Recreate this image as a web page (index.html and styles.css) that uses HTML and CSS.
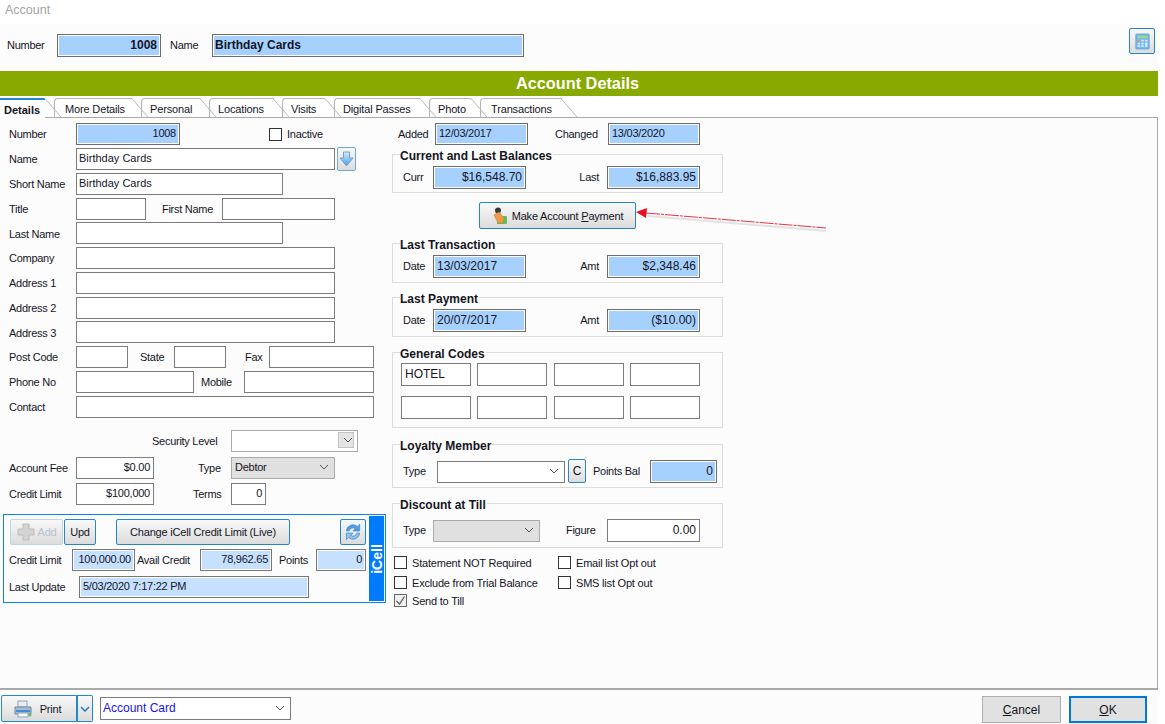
FILE: index.html
```html
<!DOCTYPE html>
<html lang="en">
<head>
<meta charset="utf-8">
<title>Account</title>
<link rel="stylesheet" href="styles.css">
</head>
<body>
<div class="app">
  <div class="titlebar">Account</div>
  <div class="header">
    <span class="lbl w50">Number</span>
    <span class="f ro strong right w104">1008</span>
    <span class="lbl ml9 w42">Name</span>
    <span class="f ro strong w312">Birthday Cards</span>
    <button class="btn calc" aria-label="Calculator">
      <svg width="15" height="17" viewBox="0 0 18 20"><rect x="1" y="1" width="16" height="18" rx="1" fill="#7ab8ec" stroke="#5aa2dc"/><rect x="3" y="3" width="12" height="3" fill="#8fdc8f"/><rect x="3" y="8" width="3" height="2" fill="#e88"/><rect x="7.500" y="8" width="3" height="2" fill="#d5e9fa"/><rect x="12" y="8" width="3" height="2" fill="#d5e9fa"/><rect x="3" y="11.500" width="3" height="2" fill="#d5e9fa"/><rect x="7.500" y="11.500" width="3" height="2" fill="#d5e9fa"/><rect x="12" y="11.500" width="3" height="5" fill="#d5e9fa"/><rect x="3" y="14.500" width="3" height="2" fill="#d5e9fa"/><rect x="7.500" y="14.500" width="3" height="2" fill="#d5e9fa"/></svg>
    </button>
  </div>
  <div class="banner">Account Details</div>
  <div class="tabs">
    <div class="tab active t-details">Details</div>
    <div class="tab t-more">More Details</div>
    <div class="tab t-personal">Personal</div>
    <div class="tab t-locations">Locations</div>
    <div class="tab t-visits">Visits</div>
    <div class="tab t-digital">Digital Passes</div>
    <div class="tab t-photo">Photo</div>
    <div class="tab t-trans">Transactions</div>
  </div>

  <div class="panel">
    <div class="col-left">
      <div class="row">
        <span class="lbl w67">Number</span>
        <span class="f ro right w104">1008</span>
        <span class="check ml89"></span><span class="lbl ml5">Inactive</span>
      </div>
      <div class="row gap3">
        <span class="lbl w67">Name</span>
        <span class="f txt w259">Birthday Cards</span>
        <button class="btn arrowbtn" aria-label="Move down">
          <svg width="15" height="16" viewBox="0 0 15 16"><defs><linearGradient id="dn" x1="0" y1="0" x2="0" y2="1"><stop offset="0" stop-color="#d8e9f7"/><stop offset="1" stop-color="#4c9ee0"/></linearGradient></defs><path d="M4.500 1h6v6h3.500l-6.500 8-6.500-8h3.500z" fill="url(#dn)" stroke="#6ca3cf"/></svg>
        </button>
      </div>
      <div class="row gap3"><span class="lbl w67">Short Name</span><span class="f txt w207">Birthday Cards</span></div>
      <div class="row gap3">
        <span class="lbl w67">Title</span><span class="f w70"></span>
        <span class="lbl ml16 w60">First Name</span><span class="f w113"></span>
      </div>
      <div class="row gap2"><span class="lbl w67">Last Name</span><span class="f w207"></span></div>
      <div class="row gap3"><span class="lbl w67">Company</span><span class="f w259"></span></div>
      <div class="row gap3"><span class="lbl w67">Address 1</span><span class="f w259"></span></div>
      <div class="row gap3"><span class="lbl w67">Address 2</span><span class="f w259"></span></div>
      <div class="row gap2"><span class="lbl w67">Address 3</span><span class="f w259"></span></div>
      <div class="row gap3">
        <span class="lbl w67">Post Code</span><span class="f w52"></span>
        <span class="lbl ml12 w34">State</span><span class="f w52"></span>
        <span class="lbl ml19 w24">Fax</span><span class="f w105"></span>
      </div>
      <div class="row gap3">
        <span class="lbl w67">Phone No</span><span class="f w118"></span>
        <span class="lbl ml7 w43">Mobile</span><span class="f w130"></span>
      </div>
      <div class="row gap3"><span class="lbl w67">Contact</span><span class="f w298"></span></div>

      <div class="row gap12">
        <span class="lbl ml143 w79">Security Level</span>
        <span class="f sel soft w127"><span class="chevbox"><svg class="chev" viewBox="0 0 10 6"><path d="M1 1l4 4 4-4"/></svg></span></span>
      </div>
      <div class="row gap5">
        <span class="lbl w67">Account Fee</span><span class="f right w78">$0.00</span>
        <span class="lbl ml44 w33">Type</span>
        <span class="f sel soft grey w104">Debtor<svg class="chev" viewBox="0 0 10 6"><path d="M1 1l4 4 4-4"/></svg></span>
      </div>
      <div class="row gap4">
        <span class="lbl w67">Credit Limit</span><span class="f right w78">$100,000</span>
        <span class="lbl ml39 w38">Terms</span><span class="f right w35">0</span>
      </div>

      <section class="icell">
        <div class="icell-main">
          <div class="btnrow">
            <button class="btn disabled w53">
              <svg width="18" height="18" viewBox="0 0 18 18"><path d="M6 1h6v5h5v6h-5v5H6v-5H1V6h5z" fill="#d4d4d4" stroke="#bcbcbc"/></svg>Add
            </button>
            <button class="btn ml1 w32">Upd</button>
            <button class="btn ml20 w174">Change iCell Credit Limit (Live)</button>
            <button class="btn ml50 w26" aria-label="Refresh">
              <svg width="20" height="20" viewBox="0 0 18 18"><path d="M3 8a6 6 0 0 1 10-4l2-2v6h-6l2-2a3.500 3.500 0 0 0-5.500 2z" fill="#4f9fe2" stroke="#3b86c8" stroke-width=".6"/><path d="M15 10a6 6 0 0 1-10 4l-2 2v-6h6l-2 2a3.500 3.500 0 0 0 5.500-2z" fill="#8cc3ef" stroke="#3b86c8" stroke-width=".6"/></svg>
            </button>
          </div>
          <div class="row gap4">
            <span class="lbl w63">Credit Limit</span><span class="f pale right w63">100,000.00</span>
            <span class="lbl ml2 w63">Avail Credit</span><span class="f pale right w72">78,962.65</span>
            <span class="lbl ml7 w37">Points</span><span class="f pale right w50">0</span>
          </div>
          <div class="row gap5">
            <span class="lbl w70">Last Update</span><span class="f pale w230">5/03/2020 7:17:22 PM</span>
          </div>
        </div>
        <div class="icell-bar"><span>iCell</span></div>
      </section>
    </div>

    <div class="col-right">
      <div class="row indent6">
        <span class="lbl w37">Added</span><span class="f ro w93">12/03/2017</span>
        <span class="lbl ml27 w53">Changed</span><span class="f ro w92">13/03/2020</span>
      </div>

      <div class="group g-bal">
        <div class="legend">Current and Last Balances</div>
        <div class="grow r3">
          <span class="lbl w30">Curr</span><span class="f ro big right w93">$16,548.70</span>
          <span class="lbl end w81">Last</span><span class="f ro big right w93">$16,883.95</span>
        </div>
      </div>

      <button class="btn pay">
        <svg width="16" height="18" viewBox="0 0 16 18"><rect x="5" y="9" width="10" height="8" rx="1" fill="#58c25c"/><circle cx="6" cy="3.500" r="3" fill="#3c3c3c"/><path d="M2 8l5-3 5 6-1 5H6z" fill="#ef9a45" stroke="#c9742a" stroke-width=".5"/></svg>
        <span>Make Account <u>P</u>ayment</span>
      </button>

      <div class="group g-trans">
        <div class="legend">Last Transaction</div>
        <div class="grow r3">
          <span class="lbl w30">Date</span><span class="f ro big w93">13/03/2017</span>
          <span class="lbl end w81">Amt</span><span class="f ro big right w93">$2,348.46</span>
        </div>
      </div>

      <div class="group g-trans">
        <div class="legend">Last Payment</div>
        <div class="grow r3">
          <span class="lbl w30">Date</span><span class="f ro big w93">20/07/2017</span>
          <span class="lbl end w81">Amt</span><span class="f ro big right w93">($10.00)</span>
        </div>
      </div>

      <div class="group g-codes">
        <div class="legend">General Codes</div>
        <div class="codes">
          <span class="f big">HOTEL</span><span class="f"></span><span class="f"></span><span class="f"></span>
          <span class="f"></span><span class="f"></span><span class="f"></span><span class="f"></span>
        </div>
      </div>

      <div class="group g-loyal">
        <div class="legend">Loyalty Member</div>
        <div class="grow r7">
          <span class="lbl w34">Type</span>
          <span class="f sel w128"><svg class="chev" viewBox="0 0 10 6"><path d="M1 1l4 4 4-4"/></svg></span>
          <button class="btn cbtn">C</button>
          <span class="lbl ml7 w57">Points Bal</span>
          <span class="f ro big right w67">0</span>
        </div>
      </div>

      <div class="group g-disc">
        <div class="legend">Discount at Till</div>
        <div class="grow r7">
          <span class="lbl w30">Type</span>
          <span class="f sel soft grey w107"><svg class="chev" viewBox="0 0 10 6"><path d="M1 1l4 4 4-4"/></svg></span>
          <span class="lbl ml26 w41">Figure</span>
          <span class="f big right w93">0.00</span>
        </div>
      </div>

      <div class="checks">
        <label class="cb"><span class="check"></span>Statement NOT Required</label>
        <label class="cb"><span class="check"></span>Email list Opt out</label>
        <label class="cb"><span class="check"></span>Exclude from Trial Balance</label>
        <label class="cb"><span class="check"></span>SMS list Opt out</label>
        <label class="cb"><span class="check on"><svg width="11" height="11" viewBox="0 0 11 11"><path d="M1.500 6l3 3 5-7.500" fill="none" stroke="#555" stroke-width="1.200"/></svg></span>Send to Till</label>
      </div>
    </div>

    <svg class="pointer" width="200" height="34" viewBox="0 0 200 34">
      <path d="M12 6L190 21" stroke="#000" stroke-opacity=".1" stroke-width="2" transform="translate(0 2)"/>
      <path d="M10 5L190 20" stroke="#ee3040" stroke-width="1" stroke-dasharray="14 1 3 1"/>
      <path d="M0 4l11-4-1 10z" fill="#e8101e"/>
    </svg>
  </div>

  <div class="footer">
    <div class="split">
      <button class="btn printbtn">
        <svg width="20" height="18" viewBox="0 0 20 18"><rect x="5" y="1" width="9" height="6" fill="#e8eef4" stroke="#8fa3b5"/><path d="M2 7h16v7H2z" fill="#a9bccd" stroke="#6f8aa3"/><rect x="3" y="10" width="14" height="2" fill="#3f8fd8"/><rect x="5" y="13" width="10" height="4" fill="#f3f6f9" stroke="#8fa3b5"/><circle cx="17" cy="15" r="1.500" fill="#5cc24f"/></svg>
        <span>Print</span>
      </button>
      <button class="btn printdrop" aria-label="Print options"><svg class="chev blue" viewBox="0 0 10 6"><path d="M1 1l4 4 4-4"/></svg></button>
    </div>
    <span class="f sel big link w191">Account Card<svg class="chev" viewBox="0 0 10 6"><path d="M1 1l4 4 4-4"/></svg></span>
    <button class="cmd cancel"><u>C</u>ancel</button>
    <button class="cmd ok"><u>O</u>K</button>
  </div>
</div>
</body>
</html>
```
FILE: styles.css
```css
* { box-sizing: border-box; }
html, body { margin: 0; padding: 0; height: 100%; overflow: hidden; background: #fff; }
body { font: 11px/14px "Liberation Sans", Arial, sans-serif; color: #15151f; }
button { font: inherit; color: inherit; margin: 0; padding: 0; }

.app { width: 1158px; height: 724px; display: flex; flex-direction: column; background: #fcfcfc; }

.titlebar { height: 24px; padding: 3px 5px 0; color: #a3a3a3; background: #fff; font-size: 12.500px; }
.header { height: 47px; display: flex; align-items: flex-start; padding: 10px 3px 0 7px; }
.header .f { height: 23px; }
.header .lbl { line-height: 23px; }
.calc { margin: -6px 0 0 auto; width: 26px; height: 26px; }

.banner { height: 25px; padding-right: 3px; background: #87a900; color: #fff; font-size: 16.300px; font-weight: 700; line-height: 25px; text-align: center; }

.tabs { height: 22px; display: flex; padding-top: 2px; background: #fff; border-bottom: 1px solid #a9a9a9; }
.tab { position: relative; height: 20px; margin-right: 9px; padding: 3px 0 0 8px; border: 1px solid #b5b5b5; border-bottom: 0; border-right: 0; border-radius: 4px 0 0 0; letter-spacing: -.15px; }
.tab::after { content: ""; position: absolute; top: -1px; right: 0; width: 1px; height: 20px; border-right: 1px solid #b5b5b5; transform: skewX(41deg); transform-origin: top left; }
.tab.active { height: 21px; padding-left: 4px; border: 0; border-top: 2px solid #1f86d8; border-radius: 0; font-weight: 700; letter-spacing: 0; background: #fcfcfc; }
.tab.active::after { top: -2px; height: 20px; }
.t-details { width: 45px; }
.t-more { width: 78px; padding-left: 10px; }
.t-personal { width: 59px; }
.t-locations { width: 64px; }
.t-visits { width: 43px; }
.t-digital { width: 86px; padding-left: 8px; }
.t-photo { width: 42px; }
.t-trans { width: 81px; padding-left: 10px; }

.panel { position: relative; height: 572px; display: flex; padding: 5px 0 0 9px; border-right: 1px solid #a9a9a9; border-bottom: 2px solid #a9a9a9; }
.col-left { width: 383px; }
.col-right { width: 331px; }

.row { display: flex; align-items: center; height: 22px; }
.gap2 { margin-top: 2px; }
.gap2 .lbl { padding-top: 2px; }
.gap3 { margin-top: 3px; }
.gap4 { margin-top: 4px; }
.gap5 { margin-top: 5px; }
.gap12 { margin-top: 12px; }
.indent6 { padding-left: 6px; }

.lbl { flex: none; white-space: nowrap; letter-spacing: -.27px; }
.lbl.end { text-align: right; padding-right: 8px; }

.f { flex: none; display: flex; align-items: center; height: 22px; padding: 0 3px 2px; background: #fff; border: 1px solid #7c7c7c; white-space: nowrap; letter-spacing: -.25px; }
.txt { padding-left: 2px; letter-spacing: 0; }
.right { justify-content: flex-end; }
.ro { background: #a6d1ff; border-color: #6c6c6c; box-shadow: inset 0 0 0 1px #fff; }
.pale { background: #c6e1ff; border-color: #777; box-shadow: inset 0 0 0 1px #fff; }
.strong { font-size: 12px; font-weight: 700; letter-spacing: 0; padding-left: 2px; }
.big { font-size: 12px; height: 23px; letter-spacing: 0; }
.sel { justify-content: space-between; padding-right: 5px; }
.sel .chev:only-child { margin-left: auto; }
.soft { border-color: #ababab; }
.grey { background: #e0e0e0; }
.link { color: #1414f0; padding-left: 2px; }

.chev { width: 10px; height: 6px; fill: none; stroke: #555; stroke-width: 1; }
.chev.blue { stroke: #1f7cc4; stroke-width: 1.500; }
.chevbox { display: flex; align-items: center; justify-content: center; width: 16px; height: 16px; margin: 0 -2px 0 auto; background: #e3e3e3; border: 1px solid #c4c4c4; }

.check { flex: none; display: block; width: 13px; height: 13px; background: #fff; border: 1px solid #333; }
.check.on { display: flex; align-items: center; justify-content: center; background: #f1f1f1; border-color: #666; }

.btn { flex: none; display: flex; align-items: center; justify-content: center; gap: 4px; height: 26px; background: linear-gradient(#f8f8f8, #dcdcdc); border: 1px solid #2787c4; border-radius: 2px; letter-spacing: -.2px; }
.btn.disabled { color: #b4c4d0; border-color: #bdd6e6; gap: 3px; }
.arrowbtn { width: 19px; height: 24px; margin: -1px 0 0 2px; border-color: #67abd6; }

.w24 { width: 24px; } .w26 { width: 26px; } .w30 { width: 30px; } .w32 { width: 32px; } .w33 { width: 33px; }
.w34 { width: 34px; } .w35 { width: 35px; } .w37 { width: 37px; } .w38 { width: 38px; }
.w41 { width: 41px; } .w42 { width: 42px; } .w43 { width: 43px; } .w50 { width: 50px; }
.w52 { width: 52px; } .w53 { width: 53px; } .w57 { width: 57px; } .w60 { width: 60px; }
.w63 { width: 63px; } .w67 { width: 67px; } .w70 { width: 70px; }
.w72 { width: 72px; } .w78 { width: 78px; } .w79 { width: 79px; } .w81 { width: 81px; }
.w92 { width: 92px; } .w93 { width: 93px; } .w104 { width: 104px; } .w105 { width: 105px; }
.w107 { width: 107px; } .w113 { width: 113px; } .w118 { width: 118px; } .w127 { width: 127px; }
.w128 { width: 128px; } .w130 { width: 130px; } .w174 { width: 174px; } .w191 { width: 191px; }
.w207 { width: 207px; } .w230 { width: 230px; } .w259 { width: 259px; } .w298 { width: 298px; }
.w312 { width: 312px; }
.ml1 { margin-left: 1px; } .ml2 { margin-left: 2px; } .ml5 { margin-left: 5px; } .ml7 { margin-left: 7px; }
.ml9 { margin-left: 9px; } .ml12 { margin-left: 12px; } .ml16 { margin-left: 16px; } .ml19 { margin-left: 19px; }
.ml20 { margin-left: 20px; } .ml26 { margin-left: 26px; } .ml27 { margin-left: 27px; } .ml39 { margin-left: 39px; }
.ml44 { margin-left: 44px; } .ml50 { margin-left: 50px; } .ml89 { margin-left: 89px; } .ml143 { margin-left: 143px; }

.icell { display: flex; width: 383px; height: 89px; margin: 9px 0 0 -6px; padding: 1px; border: 1px solid #0a84f0; background: #fcfcfc; }
.icell-main { width: 365px; padding: 3px 0 0 4px; }
.btnrow { display: flex; padding-left: 1px; }
.icell-bar { display: flex; align-items: center; justify-content: center; width: 15px; background: #007bff; color: #fff; font-size: 14px; font-weight: 700; }
.icell-bar span { transform: rotate(-90deg); }

.group { width: 331px; border: 1px solid #dcdcdc; }
.legend { width: max-content; margin: -6px 0 0 7px; font-size: 12px; font-weight: 700; line-height: 14px; background: #fcfcfc; padding-right: 1px; }
.g-bal { height: 39px; margin-top: 9px; }
.g-trans { height: 40px; margin-top: 14px; }
.g-codes { height: 76px; margin-top: 15px; }
.g-loyal { height: 44px; margin-top: 16px; }
.g-disc { height: 45px; margin-top: 15px; }
.grow { display: flex; align-items: center; height: 23px; padding-left: 10px; }
.grow .lbl { padding-bottom: 2px; }
.r3 { margin-top: 3px; }
.r7 { margin-top: 7px; }
.cbtn { width: 18px; height: 24px; margin: -1px 0 0 3px; font-size: 12px; }

.codes { display: grid; grid-template-columns: 76px 77px 76px 70px; grid-auto-rows: 23px; row-gap: 10px; margin-top: 2px; padding-left: 8px; }
.codes .f { width: 70px; height: 23px; }

.pay { width: 157px; height: 27px; margin: 9px 0 0 87px; gap: 4px; }

.checks { display: grid; grid-template-columns: 164px 1fr; grid-template-rows: 20px 18px 14px; margin-top: 8px; padding-left: 2px; }
.cb { display: flex; align-items: flex-start; height: 14px; gap: 5px; white-space: nowrap; letter-spacing: -.2px; }

.pointer { position: absolute; left: 636px; top: 90px; }

.footer { flex: 1; display: flex; align-items: flex-start; padding: 5px 11px 0 1px; }
.split { display: flex; }
.printbtn { width: 76px; height: 27px; gap: 7px; border-radius: 2px 0 0 2px; padding-right: 4px; }
.printdrop { width: 16px; height: 27px; border-left: 0; border-radius: 0 2px 2px 0; box-shadow: inset 1px 0 0 #2787c4; }
.footer > .f { margin: 2px 0 0 7px; }
.cmd { height: 27px; margin-top: 1px; font-size: 12px; background: #e1e1e1; border: 1px solid #adadad; }
.cancel { width: 79px; margin-left: auto; }
.ok { width: 78px; margin-left: 8px; border: 2px solid #0078d7; }
```
